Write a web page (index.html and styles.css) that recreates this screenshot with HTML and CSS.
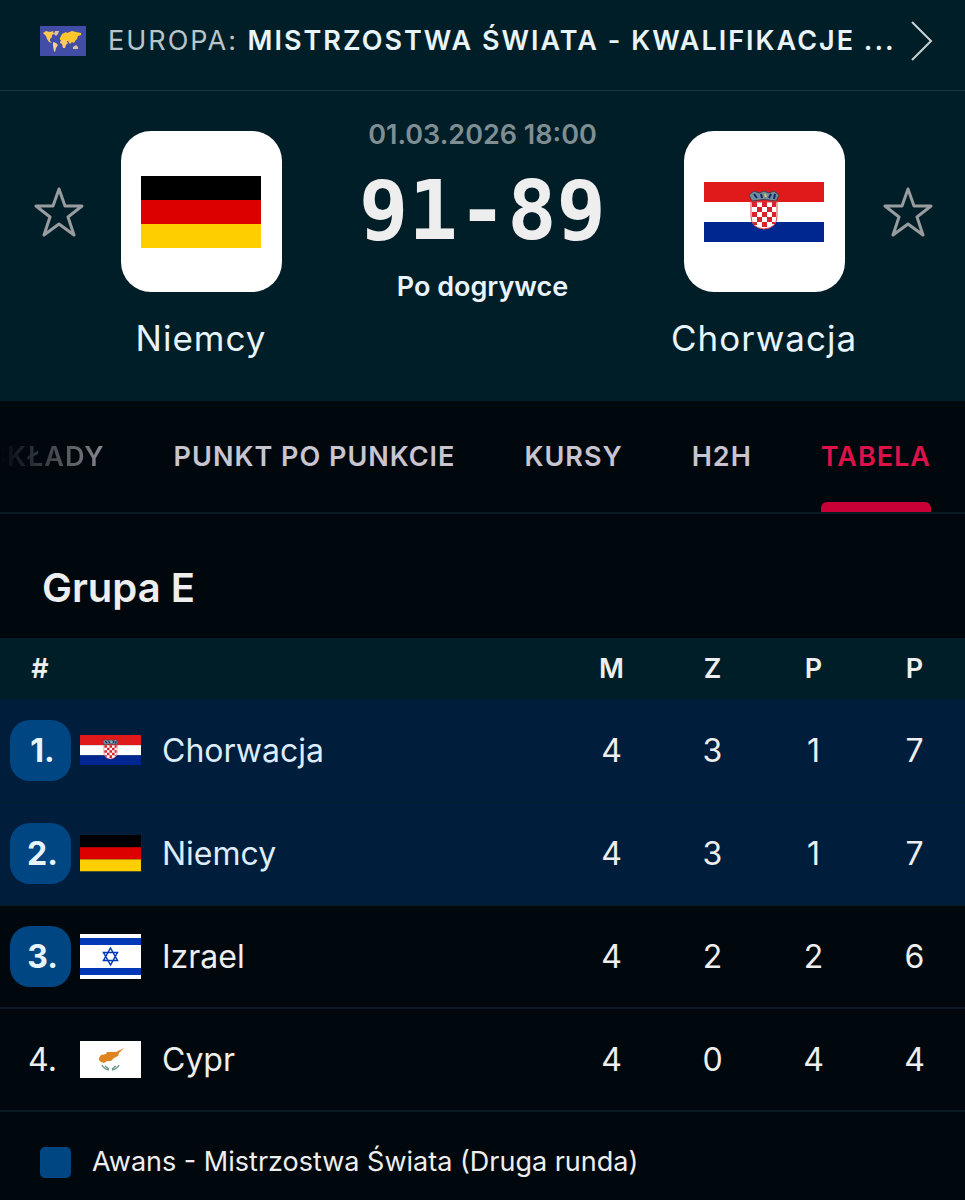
FILE: index.html
```html
<!DOCTYPE html>
<html lang="pl">
<head>
    <meta charset="UTF-8">
    <meta name="viewport" content="width=device-width, initial-scale=1.0">
    <title>Niemcy - Chorwacja 91-89</title>
    <link rel="stylesheet" href="styles.css">
</head>
<body>
    <!-- flags used more than once -->
    <svg class="sprite" aria-hidden="true">
        <symbol id="flag-de" viewBox="0 0 120 72">
            <rect width="120" height="24" fill="#000"/>
            <rect y="24" width="120" height="24" fill="#dd0000"/>
            <rect y="48" width="120" height="24" fill="#ffce00"/>
        </symbol>
        <symbol id="flag-hr" viewBox="0 0 120 60">
            <rect width="120" height="20" fill="#e01a1a"/>
            <rect y="20" width="120" height="20" fill="#fff"/>
            <rect y="40" width="120" height="20" fill="#00268f"/>
            <path d="M47 20h26v14q0 12-13 13q-13-1-13-13z" fill="#fff" stroke="#e3444a" stroke-width="1"/>
            <path d="M48 20h5v5h-5zM58 20h5v5h-5zM68 20h4v5h-4zM53 25h5v5h-5zM63 25h5v5h-5zM48 30h5v5h-5zM58 30h5v5h-5zM68 30h4v5h-4zM53 35h5v5h-5zM63 35h5v5h-5zM49 40h4v3h-4zM58 40h5v5h-5zM68 40h3v2h-3z" fill="#d8232c"/>
            <path d="M45 13l5-4 5 2 5-2 5 2 5-2 5 4-3 6q-12-3-24 0z" fill="#6f8f9c" stroke="#4b3d4d" stroke-width="1"/>
            <path d="M50 12l3 4M57 12l1 4M67 12l-2 4M71 12l-1 5" stroke="#14216b" stroke-width="2"/>
            <path d="M61 12l1 3" stroke="#d9c54c" stroke-width="2"/>
        </symbol>
    </svg>

    <header>
        <a class="league" href="#">
            <svg class="league-flag" viewBox="0 0 46 30" aria-hidden="true">
                <rect width="46" height="30" fill="#424da8"/>
                <path d="M3 7l3-2 4 1 3-1 1 3-2 1 0 2-2 2 0 2 2 2-3-1-2-3-1-3-2-2z" fill="#ffc94d"/>
                <path d="M15 5l4 0-1 3-2 2-2-2z" fill="#d9c49a"/>
                <path d="M13 16l3 1 2 2-2 3-1 4-1-1-1-5z" fill="#ffd08a"/>
                <path d="M20 12l2-4 4-2 1 1 5-2 4 1 5 1 0 2-3 1-1 3-2 2-1 2-2-1-2 2-2-3-2 0-2-1-4 0z" fill="#ffc72e"/>
                <path d="M21 14l5 0 2 3-2 2-1 3-2 0-1-4-2-1z" fill="#ffca66"/>
                <path d="M33 21l3-2 2 2 0 2-5 0z" fill="#d5c3a5"/>
            </svg>
            <span class="league-name">EUROPA: <strong>MISTRZOSTWA ŚWIATA - KWALIFIKACJE ...</strong></span>
            <svg class="chevron" viewBox="0 0 22 40" aria-hidden="true">
                <path d="M1 1l19 19L1 39"/>
            </svg>
        </a>

        <section class="match">
            <button class="star-btn" type="button" aria-label="Obserwuj Niemcy">
                <svg viewBox="0 0 50 50"><path d="M25 2l6 17h17L34 30l6 18-15-11-15 11 6-18L2 19h17z"/></svg>
            </button>
            <div class="team">
                <div class="team-logo"><svg class="flag-large-de"><use href="#flag-de"/></svg></div>
                <a class="team-name" href="#">Niemcy</a>
            </div>
            <div class="result">
                <time class="date" datetime="2026-03-01T18:00">01.03.2026 18:00</time>
                <div class="score">91-89</div>
                <div class="status">Po dogrywce</div>
            </div>
            <div class="team">
                <div class="team-logo"><svg class="flag-large-hr"><use href="#flag-hr"/></svg></div>
                <a class="team-name" href="#">Chorwacja</a>
            </div>
            <button class="star-btn" type="button" aria-label="Obserwuj Chorwacja">
                <svg viewBox="0 0 50 50"><path d="M25 2l6 17h17L34 30l6 18-15-11-15 11 6-18L2 19h17z"/></svg>
            </button>
        </section>
    </header>

    <nav class="tabs">
        <a class="tab" href="#">SKŁADY</a>
        <a class="tab" href="#">PUNKT PO PUNKCIE</a>
        <a class="tab" href="#">KURSY</a>
        <a class="tab" href="#">H2H</a>
        <a class="tab active" href="#">TABELA</a>
    </nav>

    <main>
        <h1>Grupa E</h1>

        <table class="standings">
            <thead>
                <tr>
                    <th class="col-rank" scope="col">#</th>
                    <th scope="col" aria-label="Drużyna"></th>
                    <th class="col-num" scope="col">M</th>
                    <th class="col-num" scope="col">Z</th>
                    <th class="col-num" scope="col">P</th>
                    <th class="col-num" scope="col">P</th>
                </tr>
            </thead>
            <tbody>
                <tr class="selected">
                    <td><span class="rank promoted">1.</span></td>
                    <td>
                        <a class="row-team" href="#">
                            <svg class="flag" viewBox="0 0 60 30"><use href="#flag-hr"/></svg>
                            Chorwacja
                        </a>
                    </td>
                    <td>4</td>
                    <td>3</td>
                    <td>1</td>
                    <td>7</td>
                </tr>
                <tr class="selected">
                    <td><span class="rank promoted">2.</span></td>
                    <td>
                        <a class="row-team" href="#">
                            <svg class="flag" viewBox="0 0 60 36"><use href="#flag-de"/></svg>
                            Niemcy
                        </a>
                    </td>
                    <td>4</td>
                    <td>3</td>
                    <td>1</td>
                    <td>7</td>
                </tr>
                <tr>
                    <td><span class="rank promoted">3.</span></td>
                    <td>
                        <a class="row-team" href="#">
                            <svg class="flag" viewBox="0 0 61 45">
                                <rect width="61" height="45" fill="#fff"/>
                                <path d="M0 4h61v7H0zM0 34h61v7H0z" fill="#0038b8"/>
                                <path d="M30.5 14l7 12.5h-14zM30.5 31l-7-12.5h14z" fill="none" stroke="#0038b8" stroke-width="1.5"/>
                            </svg>
                            Izrael
                        </a>
                    </td>
                    <td>4</td>
                    <td>2</td>
                    <td>2</td>
                    <td>6</td>
                </tr>
                <tr>
                    <td><span class="rank">4.</span></td>
                    <td>
                        <a class="row-team" href="#">
                            <svg class="flag" viewBox="0 0 61 37">
                                <rect width="61" height="37" fill="#fff"/>
                                <path d="M19 17l2-3 5-1 1-2 9 0 8-4-5 5-1 3-4 2-3 3-4 0-3 2-3-1-2-2z" fill="#e08420"/>
                                <path d="M22 24q2 4 7 5M39 24q-2 4-7 5M25 25l4 3M36 25l-4 3" fill="none" stroke="#6b9a8b" stroke-width="1.5"/>
                            </svg>
                            Cypr
                        </a>
                    </td>
                    <td>4</td>
                    <td>0</td>
                    <td>4</td>
                    <td>4</td>
                </tr>
            </tbody>
        </table>

        <div class="legend">
            <span class="legend-color"></span>
            <span>Awans - Mistrzostwa Świata (Druga runda)</span>
        </div>
    </main>
</body>
</html>
```
FILE: styles.css
```css
* {
    margin: 0;
    padding: 0;
    box-sizing: border-box;
}

body {
    font-family: Inter, "Liberation Sans", sans-serif;
    font-size: 27px;
    background: #00080d;
    color: #eeeeee;
}

a {
    color: inherit;
    text-decoration: none;
}

svg {
    display: block;
    flex-shrink: 0;
}

.sprite {
    position: absolute;
    width: 0;
    height: 0;
}

header {
    background: #001e28;
}

/* league bar */
.league {
    display: flex;
    align-items: center;
    height: 91px;
    padding: 0 32px 8px 40px;
    border-bottom: 1px solid #1a353e;
}

.league-flag {
    width: 46px;
    height: 30px;
}

.league-name {
    flex: 1;
    min-width: 0;
    margin: 0 8px 0 22px;
    overflow: hidden;
    white-space: nowrap;
    letter-spacing: 2px;
    line-height: 40px;
    color: #b8c6ca;
}

.league-name strong {
    font-weight: 600;
    color: #e8f4f8;
}

.chevron {
    width: 22px;
    height: 40px;
    fill: none;
    stroke: #c8d2d6;
    stroke-width: 2;
}

/* match header */
.match {
    display: grid;
    grid-template-columns: 100px 202px 1fr 202px 100px;
    padding: 28px 0 40px;
}

.star-btn {
    align-self: start;
    justify-self: end;
    margin: 68px 16px 0 0;
    background: none;
    border: none;
    cursor: pointer;
}

.star-btn:last-child {
    justify-self: start;
    margin: 68px 0 0 18px;
}

.star-btn svg {
    width: 50px;
    height: 50px;
    fill: none;
    stroke: #999c9e;
    stroke-width: 3;
    stroke-linejoin: round;
}

.team {
    display: flex;
    flex-direction: column;
    align-items: center;
    padding-top: 12px;
}

.team-logo {
    display: flex;
    align-items: center;
    justify-content: center;
    width: 161px;
    height: 161px;
    background: #fff;
    border-radius: 30px;
}

.flag-large-de {
    width: 120px;
    height: 72px;
}

.flag-large-hr {
    width: 120px;
    height: 60px;
}

.team-name {
    margin-top: 24px;
    font-size: 35px;
    line-height: 45px;
    letter-spacing: 1px;
    color: #e8f4fc;
}

.result {
    text-align: center;
    font-weight: 600;
    line-height: 32px;
}

.date {
    display: block;
    color: #7f8e93;
}

.score {
    margin: 24px 0;
    font-family: "DejaVu Sans Mono", "Liberation Mono", monospace;
    font-size: 82px;
    font-weight: 700;
    line-height: 72px;
}

.status {
    color: #e8f4fc;
}

/* tabs */
.tabs {
    display: flex;
    justify-content: flex-end;
    gap: 69px;
    height: 113px;
    padding-right: 34px;
    border-bottom: 2px solid #0a1a22;
    overflow: hidden;
}

.tab {
    position: relative;
    flex-shrink: 0;
    font-weight: 600;
    line-height: 112px;
    letter-spacing: 1px;
    color: #c8c5d0;
}

.tab:first-child {
    color: transparent;
    background: linear-gradient(90deg, #00080d 10%, #8a8990);
    background-clip: text;
}

.tab.active {
    color: #dc1248;
}

.tab.active::after {
    content: "";
    position: absolute;
    left: 0;
    right: 0;
    bottom: 0;
    height: 10px;
    background: #c80037;
    border-radius: 6px 6px 0 0;
}

/* standings */
h1 {
    padding: 52px 42px 28px;
    font-size: 40px;
    line-height: 44px;
    font-weight: 600;
}

.standings {
    width: 100%;
    table-layout: fixed;
    border-collapse: collapse;
}

.standings th {
    height: 61px;
    background: #001e28;
    font-weight: 600;
}

.col-rank {
    width: 80px;
}

.col-num {
    width: 101px;
}

.standings td {
    height: 103px;
    border-bottom: 2px solid #0a1a22;
    font-size: 32px;
    text-align: center;
}

.standings .selected {
    background: #001e3c;
}

.standings .selected td {
    border-color: #001e30;
}

.rank {
    display: block;
    width: 61px;
    margin-left: 10px;
    padding-left: 4px;
    line-height: 61px;
    border-radius: 20px;
}

.rank.promoted {
    background: #004682;
    font-weight: 700;
    color: #e8f4fc;
}

.row-team {
    display: flex;
    align-items: center;
    gap: 21px;
}

.selected .row-team {
    color: #dcecfa;
}

.flag {
    width: 61px;
}

.legend {
    display: flex;
    align-items: center;
    gap: 21px;
    padding: 30px 40px 18px;
    line-height: 40px;
}

.legend-color {
    width: 31px;
    height: 31px;
    background: #004682;
    border-radius: 5px;
}
```
